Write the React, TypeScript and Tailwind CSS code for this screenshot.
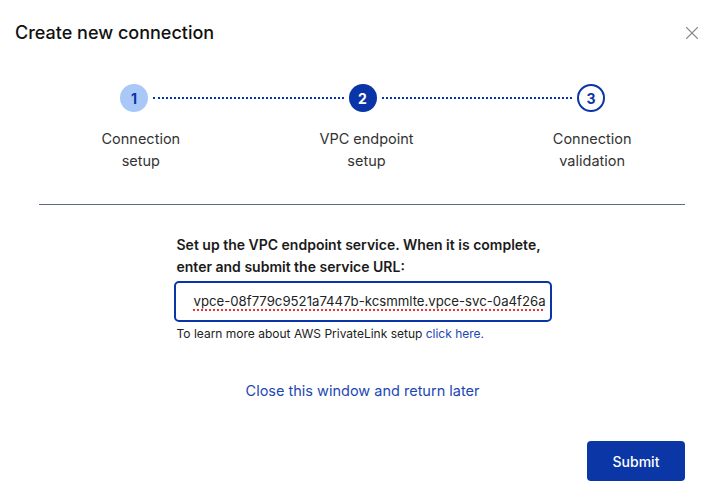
import { X } from 'lucide-react';

const steps = [
  { num: 1, label: ['Connection', 'setup'], state: 'done' },
  { num: 2, label: ['VPC endpoint', 'setup'], state: 'active' },
  { num: 3, label: ['Connection', 'validation'], state: 'todo' },
];

const circleClass = (state: string) => {
  if (state === 'done') return 'bg-[#a9c8f7] text-[#0a35a8]';
  if (state === 'active') return 'bg-[#0a35a8] text-white';
  return 'bg-white text-[#0a35a8] border-2 border-[#0a35a8]';
};

const App = () => {
  return (
    <main
      className="relative min-h-screen w-full bg-white text-[#1b1b1b]"
      style={{ fontFamily: 'Inter, "Open Sans", sans-serif' }}
    >
      {/* Header */}
      <header className="flex items-center justify-between pl-[15px] pr-[22px] pt-[21px]">
        <h1 className="text-[18px] leading-[24px] font-medium text-[#111]">Create new connection</h1>
        <button type="button" className="text-[#8a8a8a]">
          <X size={22} strokeWidth={1.2} />
        </button>
      </header>

      {/* Stepper */}
      <div className="mx-[20px] mt-[39px]">
        <div className="flex items-center px-[100px]">
          {steps.map((step, i) => (
            <div key={step.num} className={i < steps.length - 1 ? 'flex flex-1 items-center' : 'flex items-center'}>
              <span
                className={`flex h-[28px] w-[28px] shrink-0 items-center justify-center rounded-full text-[14px] font-bold ${circleClass(step.state)}`}
              >
                {step.num}
              </span>
              {i < steps.length - 1 && (
                <span className="mx-[5px] h-0 flex-1 border-t-2 border-dotted border-[#0a35a8]" />
              )}
            </div>
          ))}
        </div>
        <div className="mt-[16px] grid grid-cols-3 pl-[8px]">
          {steps.map((step) => (
            <div key={step.num} className="text-center text-[14.5px] leading-[22px] text-[#333]">
              <div>{step.label[0]}</div>
              <div>{step.label[1]}</div>
            </div>
          ))}
        </div>
      </div>

      <hr className="ml-[39px] mr-[40px] mt-[32px] border-t border-[#5d6b7e]" />

      {/* Body */}
      <div className="mx-auto mt-[29px] w-[378px]">
        <p className="pl-[3px] text-[14px] leading-[22px] font-semibold text-[#1b1b1b]">
          Set up the VPC endpoint service. When it is complete, enter and submit the service URL:
        </p>
        <div className="mt-[3px] flex h-[41px] w-full items-center overflow-hidden whitespace-nowrap rounded-[5px] border-2 border-[#0a35a8] pl-[18px] text-[13.2px] text-[#222]">
          <span className="underline decoration-dotted decoration-[#e33] decoration-2 underline-offset-[4px]">
            vpce-08f779c9521a7447b-kcsmmlte.vpce-svc-0a4f26a
          </span>
        </div>
        <p className="mt-[4px] pl-[3px] text-[12px] leading-[16px] text-[#222]">
          To learn more about AWS PrivateLink setup{' '}
          <a href="#" className="text-[#1c47b5]">
            click here.
          </a>
        </p>
      </div>

      <div className="mt-[36px] text-center">
        <a href="#" className="text-[14.5px] leading-[20px] text-[#1c47b5]">
          Close this window and return later
        </a>
      </div>

      <div className="mt-[39px] flex justify-end pr-[40px]">
        <button
          type="button"
          className="h-[40px] w-[98px] rounded-[4px] bg-[#0a36a6] text-[14px] font-medium text-white"
        >
          Submit
        </button>
      </div>
    </main>
  );
};

export default App;
